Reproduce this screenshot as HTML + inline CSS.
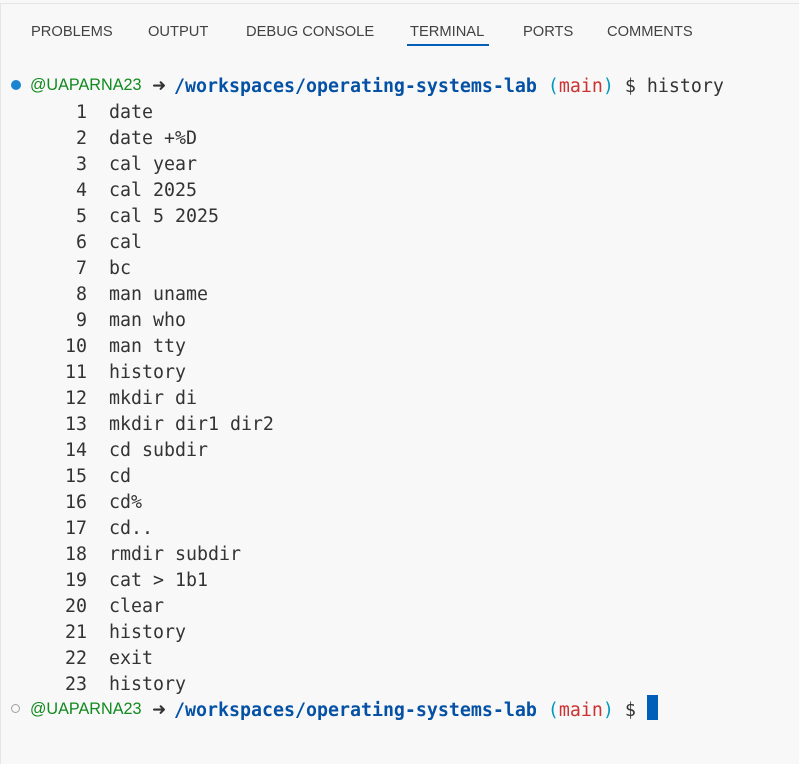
<!DOCTYPE html>
<html><head><style>
html,body{margin:0;padding:0;width:799px;height:764px;overflow:hidden;background:#f8f8f8;}
.frame{position:absolute;left:0;top:3px;width:799px;height:761px;border-top:1px solid #e5e5e5;border-left:1px solid #e5e5e5;box-sizing:border-box;}
.tab{position:absolute;top:24px;font:14.7px "Liberation Sans",sans-serif;color:#424242;white-space:nowrap;}
.ul{position:absolute;left:407px;top:44px;width:82px;height:2px;background:#005fb8;}
.ln{position:absolute;left:32px;font:18.27px "DejaVu Sans Mono",monospace;color:#333;white-space:pre;line-height:26px;height:26px;margin-top:2px;}
.p{position:absolute;left:0;height:26px;line-height:26px;white-space:pre;}
.p span{top:0}
.u{position:absolute;left:30px;font:16.2px "Liberation Sans",sans-serif;color:#108a1e;}
.ar{position:absolute;left:152px;font:17px "DejaVu Sans",sans-serif;color:#333;font-weight:bold;}
.rest{position:absolute;left:174px;font:18.27px "DejaVu Sans Mono",monospace;color:#333;}
.p .rest span{position:static}
.b{color:#0451a5;font-weight:bold}
.c{color:#0598bc}.r{color:#cd3131}
.dot{position:absolute;left:11px;width:10px;height:10px;border-radius:50%;}
</style></head><body>
<div class="frame"></div>
<div class="tab" style="left:31px">PROBLEMS</div>
<div class="tab" style="left:148px">OUTPUT</div>
<div class="tab" style="left:246px">DEBUG CONSOLE</div>
<div class="tab" style="left:410px">TERMINAL</div>
<div class="tab" style="left:523px">PORTS</div>
<div class="tab" style="left:607px">COMMENTS</div>
<div class="ul"></div>

<div class="dot" style="top:80px;background:#1a85d1"></div>
<div class="p" style="top:76px;width:799px"><span class="u">@UAPARNA23</span><span class="ar">➜</span><span class="rest"><span class="b">/workspaces/operating-systems-lab</span> <span class="c">(</span><span class="r">main</span><span class="c">)</span> $ history</span></div>

<div class="ln" style="top:98px">    1  date</div>
<div class="ln" style="top:124px">    2  date +%D</div>
<div class="ln" style="top:150px">    3  cal year</div>
<div class="ln" style="top:176px">    4  cal 2025</div>
<div class="ln" style="top:202px">    5  cal 5 2025</div>
<div class="ln" style="top:228px">    6  cal</div>
<div class="ln" style="top:254px">    7  bc</div>
<div class="ln" style="top:280px">    8  man uname</div>
<div class="ln" style="top:306px">    9  man who</div>
<div class="ln" style="top:332px">   10  man tty</div>
<div class="ln" style="top:358px">   11  history</div>
<div class="ln" style="top:384px">   12  mkdir di</div>
<div class="ln" style="top:410px">   13  mkdir dir1 dir2</div>
<div class="ln" style="top:436px">   14  cd subdir</div>
<div class="ln" style="top:462px">   15  cd</div>
<div class="ln" style="top:488px">   16  cd%</div>
<div class="ln" style="top:514px">   17  cd..</div>
<div class="ln" style="top:540px">   18  rmdir subdir</div>
<div class="ln" style="top:566px">   19  cat > 1b1</div>
<div class="ln" style="top:592px">   20  clear</div>
<div class="ln" style="top:618px">   21  history</div>
<div class="ln" style="top:644px">   22  exit</div>
<div class="ln" style="top:670px">   23  history</div>

<div class="dot" style="top:704px;border:1.5px solid #a0a0a0;width:7px;height:7px;left:11px"></div>
<div class="p" style="top:700px;width:799px"><span class="u">@UAPARNA23</span><span class="ar">➜</span><span class="rest"><span class="b">/workspaces/operating-systems-lab</span> <span class="c">(</span><span class="r">main</span><span class="c">)</span> $ </span></div>
<div style="position:absolute;left:647px;top:695px;width:11px;height:25px;background:#005fb8"></div>
</body></html>
